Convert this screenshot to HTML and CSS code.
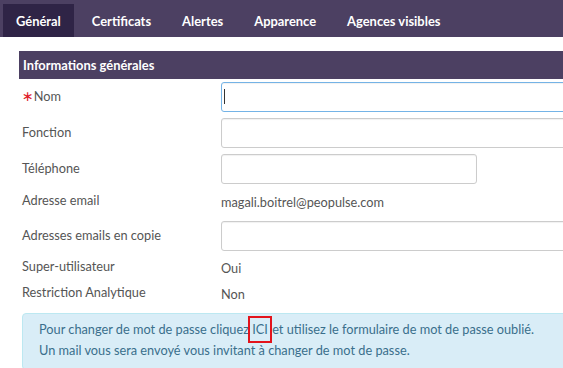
FILE: index.html
```html
<!DOCTYPE html>
<html lang="fr">
<head>
<meta charset="utf-8">
<title>Utilisateur</title>
<link rel="stylesheet" href="styles.css">
</head>
<body>
<nav class="tabs">
  <a class="tab active">Général</a>
  <a class="tab">Certificats</a>
  <a class="tab">Alertes</a>
  <a class="tab">Apparence</a>
  <a class="tab">Agences visibles</a>
</nav>
<main class="content">
  <h2 class="section-title">Informations générales</h2>
  <form class="form">
    <div class="row">
      <label class="label"><span class="req">∗</span>Nom</label>
      <span class="field focus"><input class="input wide" type="text"></span>
    </div>
    <div class="row">
      <label class="label">Fonction</label>
      <input class="input wide" type="text">
    </div>
    <div class="row">
      <label class="label">Téléphone</label>
      <input class="input short" type="text">
    </div>
    <div class="row static email">
      <span class="label">Adresse email</span>
      <span class="value">magali.boitrel@peopulse.com</span>
    </div>
    <div class="row">
      <label class="label">Adresses emails en copie</label>
      <input class="input wide" type="text">
    </div>
    <div class="row static">
      <span class="label">Super-utilisateur</span>
      <span class="value">Oui</span>
    </div>
    <div class="row static last">
      <span class="label">Restriction Analytique</span>
      <span class="value">Non</span>
    </div>
  </form>
  <div class="alert">
    <p>Pour changer de mot de passe cliquez <a class="here">ICI</a> et utilisez le formulaire de mot de passe oublié.</p>
    <p>Un mail vous sera envoyé vous invitant à changer de mot de passe.</p>
  </div>
</main>
</body>
</html>
```
FILE: styles.css
```css
html, body {
  margin: 0;
  overflow: hidden;
  background: #fff;
}
body {
  width: 640px;
  font-family: Lato, "Open Sans", sans-serif;
  font-size: 12.75px;
  color: #555;
}
.tabs {
  display: flex;
  gap: 5px;
  height: 37px;
  box-sizing: border-box;
  padding: 4px 3px 0;
  background: #4c4062;
}
.tab {
  display: flex;
  align-items: center;
  padding: 0 13px;
  color: #fff;
  font-weight: bold;
  font-size: 12.9px;
  margin-top: -4px;
  padding-top: 4px;
}
.tab.active {
  background: #2f2446;
  margin-top: 0;
  padding-top: 0;
}
.content {
  padding: 14px 0 0 19px;
}
.section-title {
  margin: 0;
  height: 28px;
  display: flex;
  align-items: center;
  padding-left: 4px;
  background: #4c4062;
  color: #fff;
  font-size: 12.9px;
  font-weight: bold;
}
.form {
  margin: 3px 0 0 3px;
}
.row {
  display: flex;
  align-items: center;
  margin-bottom: 6px;
}
.label {
  width: 199px;
  flex: none;
  position: relative;
  top: -1px;
}
.req {
  color: #e0202a;
  font-family: "DejaVu Sans", sans-serif;
  font-size: 14px;
}
.input {
  height: 30px;
  box-sizing: border-box;
  border: 1px solid #ccc;
  border-radius: 3px;
  padding: 0 8px;
  font: inherit;
  margin: 0;
  box-shadow: inset 0 1px 1px rgba(0,0,0,0.06);
}
.wide { width: 400px; }
.short { width: 256px; }
.field {
  position: relative;
  display: block;
}
.field.focus .input {
  border-color: #74b3e6;
  outline: none;
}
.field.focus::after {
  content: "";
  position: absolute;
  left: 3px;
  top: 7px;
  width: 1px;
  height: 15px;
  background: #333;
}
.static {
  height: 20px;
}
.email {
  height: 21px;
  margin-bottom: 10px;
}
.value {
  position: relative;
  top: 1px;
}
.last {
  margin-bottom: 10px;
}
.alert {
  margin-left: 3px;
  background: #d9edf7;
  border: 1px solid #bce8f1;
  border-radius: 4px;
  color: #3a6f8c;
  padding: 5px 15px 8px 16px;
  width: 580px;
}
.alert p {
  margin: 0;
  line-height: 21px;
}
.here {
  color: #3a6f8c;
  border: 2px solid #e3141c;
  padding: 3px 2px 4px;
  margin: 0 -3px 0 -4px;
}
```
